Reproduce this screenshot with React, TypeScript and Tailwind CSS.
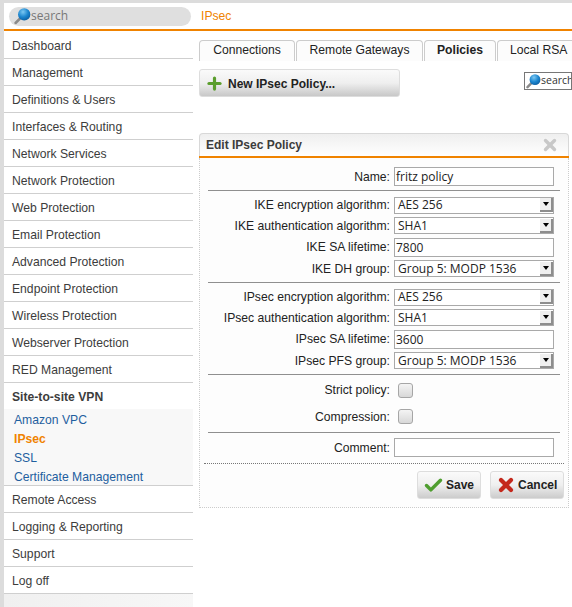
import { Plus, Check, X } from "lucide-react";

const mainMenu = [
  "Dashboard",
  "Management",
  "Definitions & Users",
  "Interfaces & Routing",
  "Network Services",
  "Network Protection",
  "Web Protection",
  "Email Protection",
  "Advanced Protection",
  "Endpoint Protection",
  "Wireless Protection",
  "Webserver Protection",
  "RED Management",
];
const subMenu = ["Amazon VPC", "IPsec", "SSL", "Certificate Management"];
const bottomMenu = ["Remote Access", "Logging & Reporting", "Support", "Log off"];

function Lens({ size }: { size: number }) {
  return (
    <svg width={size} height={size} viewBox="0 0 16 16" className="shrink-0">
      <defs>
        <radialGradient id="lens" cx="40%" cy="30%" r="75%">
          <stop offset="0%" stopColor="#7cc8f2" />
          <stop offset="55%" stopColor="#1c86cf" />
          <stop offset="100%" stopColor="#0b5c9e" />
        </radialGradient>
      </defs>
      <path d="M6 9.5 1.6 14" stroke="#8a8a8a" strokeWidth="2.6" strokeLinecap="round" />
      <circle cx="9.6" cy="6" r="5.8" fill="url(#lens)" />
    </svg>
  );
}

function MenuItem({ label }: { label: string }) {
  return (
    <div className="h-[27px] border-b border-[#cfcfcf] pl-2 pt-[6px] text-[12.16px] leading-[17px] text-[#3c3c3c]">
      {label}
    </div>
  );
}

function Tab({ label, width, active }: { label: string; width: string; active?: boolean }) {
  return (
    <div
      className={`${width} flex h-[21px] shrink-0 items-center justify-center rounded-t-[4px] border border-b-0 border-[#cccccc] bg-[#fcfcfc] pb-[2px] text-[12.16px] text-[#222] ${active ? "font-bold" : ""}`}
    >
      {label}
    </div>
  );
}

function Row({ label, height, nudge, children }: { label: string; height: string; nudge?: boolean; children: React.ReactNode }) {
  return (
    <div className={`${height} flex items-center`}>
      <div className={`w-[194px] pr-[4px] text-right text-[12.16px] text-[#222] ${nudge ? "pt-[2px]" : ""}`}>{label}</div>
      {children}
    </div>
  );
}

function TextBox({ value }: { value?: string }) {
  return (
    <div className="h-[19px] w-[160px] border border-[#a9a9a9] bg-white pl-px font-['Open_Sans'] text-[12px] leading-[17px] text-[#222]">
      {value}
    </div>
  );
}

function SelectBox({ value }: { value: string }) {
  return (
    <div className="flex h-[17px] w-[160px] items-center justify-between border border-[#a9a9a9] bg-white pl-[3px] font-['Open_Sans'] text-[12px] text-[#222]">
      <span>{value}</span>
      <span className="flex h-[14px] w-[13px] items-center justify-center border-r-2 border-b-2 border-[#8d8d8d] bg-[#efefef]">
        <span className="h-0 w-0 border-x-[3px] border-t-[4px] border-x-transparent border-t-black" />
      </span>
    </div>
  );
}

function CheckBox() {
  return <div className="ml-[4px] h-[15px] w-[15px] rounded-[3px] border border-[#a6a6a6] bg-gradient-to-b from-[#f4f4f4] to-[#d8d8d8]" />;
}

function Divider() {
  return <div className="ml-[8px] h-px w-[352px] bg-[#8f8f8f]" />;
}

export default function App() {
  return (
    <div className="h-[607px] w-[572px] overflow-hidden bg-[#dcdcdc] pt-[3px] pl-[4px] font-['Liberation_Sans',sans-serif]">
      <div className="flex h-[26px] items-center bg-white pl-[5px]">
        <div className="flex h-[19px] w-[182px] items-center rounded-full bg-[#dfdfdf] pl-[5px] font-['Open_Sans'] text-[12px] text-[#777]">
          <Lens size={17} />
          <span>search</span>
        </div>
        <span className="ml-[10px] text-[12.16px] text-[#f08300]">IPsec</span>
      </div>
      <div className="h-[2px] bg-[#f08300]" />
      <div className="flex h-[576px]">
        <div className="flex w-[189px] shrink-0 flex-col bg-gradient-to-r from-[#f0f0f0] to-[#f7f7f7]">
          <div className="bg-white">
            <div className="h-px" />
            {mainMenu.map((m) => (
              <MenuItem key={m} label={m} />
            ))}
            <div className="h-[26px] pl-2 pt-[6px] text-[12.16px] leading-[17px] font-bold text-[#3c3c3c]">Site-to-site VPN</div>
            <div className="h-[77px] border-b border-[#cfcfcf] bg-[#f8f8f8] pl-[10px] pt-[2px]">
              {subMenu.map((s) => (
                <div
                  key={s}
                  className={`h-[19px] text-[12.16px] leading-[19px] ${s === "IPsec" ? "font-bold text-[#f08300]" : "text-[#1f5f9f]"}`}
                >
                  {s}
                </div>
              ))}
            </div>
            {bottomMenu.map((m) => (
              <MenuItem key={m} label={m} />
            ))}
          </div>
        </div>
        <div className="min-w-0 flex-1 bg-white pl-[6px]">
          <div className="flex gap-px pt-[9px]">
            <Tab label="Connections" width="w-[96px]" />
            <Tab label="Remote Gateways" width="w-[127px]" />
            <Tab label="Policies" width="w-[72px]" active />
            <div className="flex h-[21px] w-[90px] shrink-0 items-center rounded-tl-[4px] border border-b-0 border-r-0 border-[#cccccc] bg-[#fcfcfc] pb-[2px] pl-[12px] text-[12.16px] text-[#222]">
              Local RSA
            </div>
          </div>
          <div className="mt-[8px] flex items-start justify-between">
            <div className="flex h-[28px] w-[201px] items-center rounded-[3px] border border-[#dddddd] bg-gradient-to-b from-[#fafafa] via-[#efefef] to-[#c8c8c8] pl-[5px] text-[12px] font-bold text-[#222]">
              <Plus size={19} strokeWidth={4} className="text-[#5b9e2d]" />
              <span className="ml-[4px] pt-px">New IPsec Policy...</span>
            </div>
            <div className="mt-[3px] flex h-[18px] w-[48px] items-center overflow-hidden border border-[#777] bg-white pl-px font-['Open_Sans'] text-[10.5px] text-[#333]">
              <Lens size={15} />
              <span>search</span>
            </div>
          </div>
          <div className="mt-[36px] w-[370px]">
            <div className="flex h-[23px] items-center justify-between rounded-t-[4px] border border-b-0 border-[#d8d8d8] bg-gradient-to-b from-[#efefef] to-[#ffffff] pr-[9px] pl-[6px] text-[12px] font-bold text-[#3c3c3c]">
              <span>Edit IPsec Policy</span>
              <X size={18} strokeWidth={4.5} className="text-[#c8c8c8]" />
            </div>
            <div className="h-[2px] bg-[#f08300]" />
            <div className="h-[350px] border-x border-b border-dotted border-[#cccccc] bg-[#fdfdfd]">
              <div className="pt-[9px]">
                <Row label="Name:" height="h-[19px]" nudge>
                  <TextBox value="fritz policy" />
                </Row>
              </div>
              <div className="mt-[4px]"><Divider /></div>
              <div className="pt-[4px]">
                <Row label="IKE encryption algorithm:" height="h-[20px]"><SelectBox value="AES 256" /></Row>
                <Row label="IKE authentication algorithm:" height="h-[21px]" nudge><SelectBox value="SHA1" /></Row>
                <Row label="IKE SA lifetime:" height="h-[23px]"><TextBox value="7800" /></Row>
                <Row label="IKE DH group:" height="h-[19px]" nudge><SelectBox value="Group 5: MODP 1536" /></Row>
              </div>
              <div className="mt-[4px]"><Divider /></div>
              <div className="pt-[4px]">
                <Row label="IPsec encryption algorithm:" height="h-[20px]"><SelectBox value="AES 256" /></Row>
                <Row label="IPsec authentication algorithm:" height="h-[21px]" nudge><SelectBox value="SHA1" /></Row>
                <Row label="IPsec SA lifetime:" height="h-[23px]"><TextBox value="3600" /></Row>
                <Row label="IPsec PFS group:" height="h-[19px]" nudge><SelectBox value="Group 5: MODP 1536" /></Row>
              </div>
              <div className="mt-[4px]"><Divider /></div>
              <div className="pt-[2px]">
                <Row label="Strict policy:" height="h-[26px]"><CheckBox /></Row>
                <Row label="Compression:" height="h-[26px]" nudge><CheckBox /></Row>
              </div>
              <div className="mt-[3px]"><Divider /></div>
              <div className="pt-[5px]">
                <Row label="Comment:" height="h-[19px]" nudge><TextBox /></Row>
              </div>
              <div className="mt-[6px] ml-[4px] w-[360px] border-t border-dotted border-[#777]" />
              <div className="mt-[7px] flex justify-end gap-[9px] pr-[4px]">
                <div className="flex h-[28px] w-[64px] items-center rounded-[3px] border border-[#dddddd] bg-gradient-to-b from-[#fafafa] via-[#efefef] to-[#cccccc] pl-[5px] text-[12px] font-bold text-[#222]">
                  <Check size={21} strokeWidth={4} className="text-[#4f9e2f]" />
                  <span className="ml-[2px]">Save</span>
                </div>
                <div className="flex h-[28px] w-[74px] items-center rounded-[3px] border border-[#dddddd] bg-gradient-to-b from-[#fafafa] via-[#efefef] to-[#cccccc] pl-[5px] text-[12px] font-bold text-[#222]">
                  <X size={20} strokeWidth={5} className="text-[#c4281c]" />
                  <span className="ml-[2px]">Cancel</span>
                </div>
              </div>
            </div>
          </div>
        </div>
      </div>
    </div>
  );
}
